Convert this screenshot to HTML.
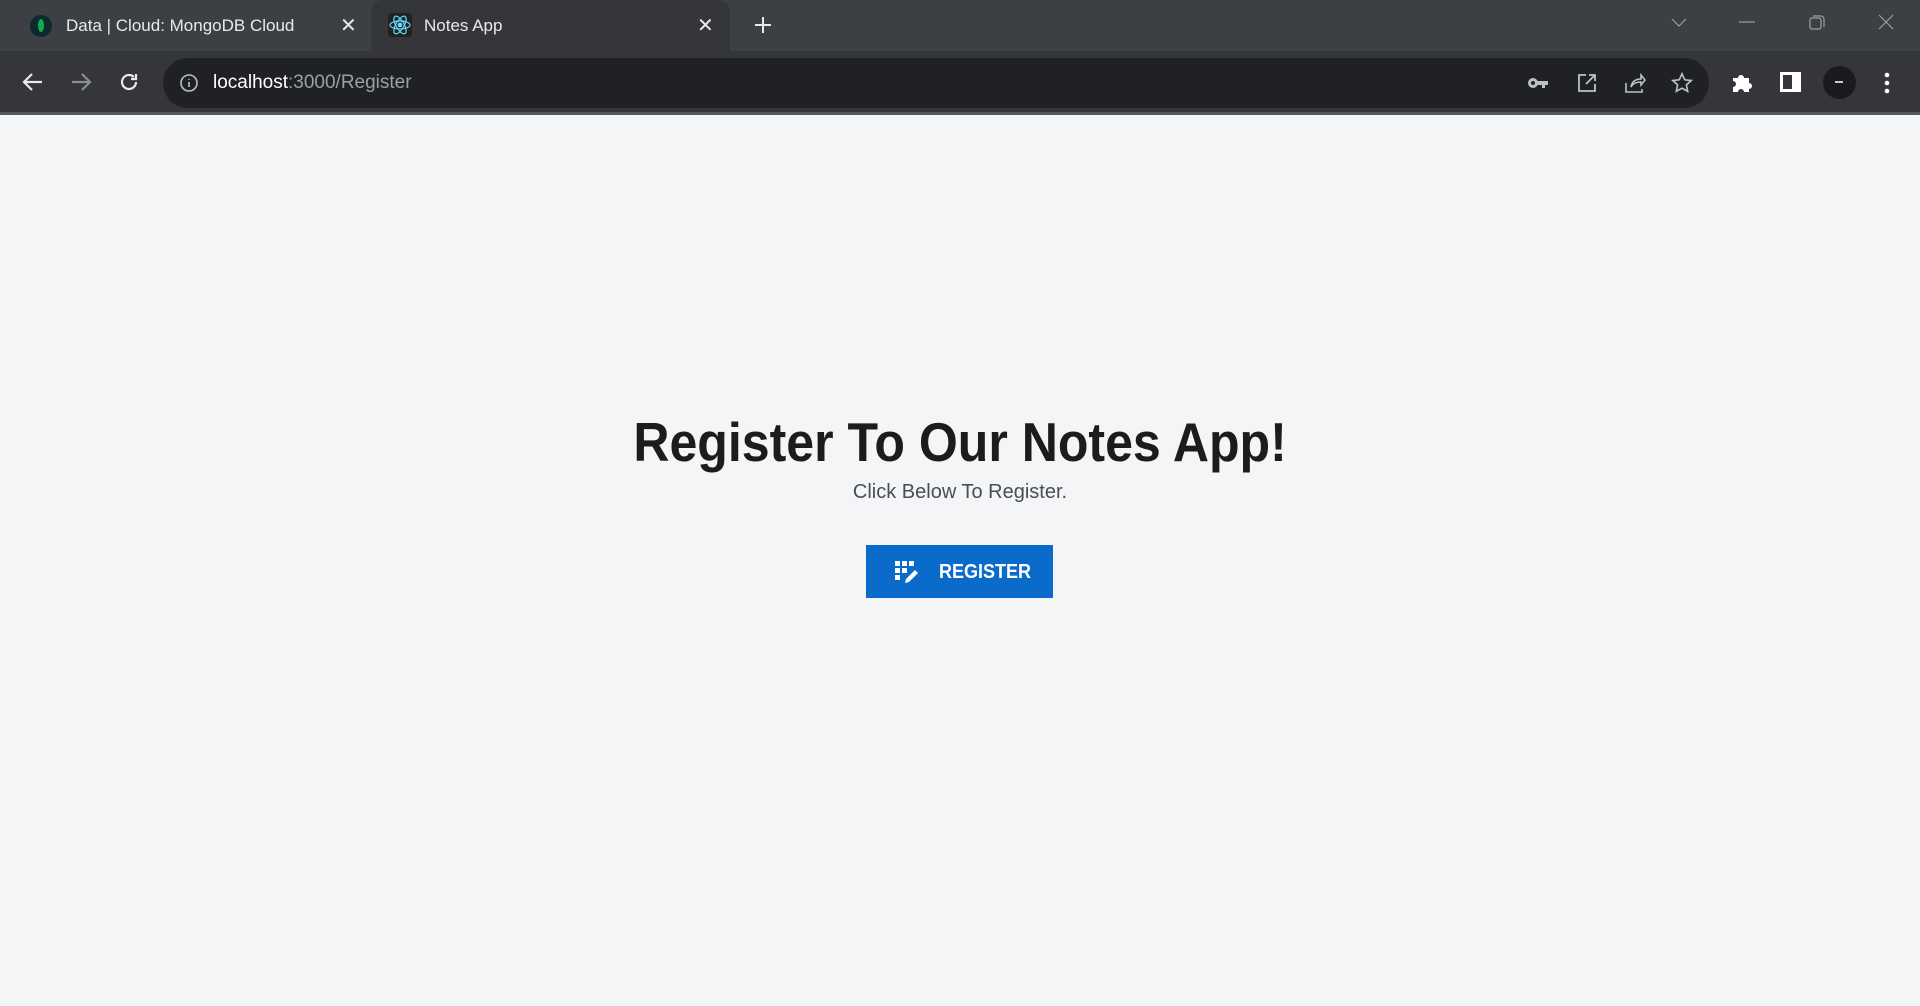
<!DOCTYPE html>
<html><head><meta charset="utf-8"><style>
*{margin:0;padding:0;box-sizing:border-box}
body{width:1920px;height:1006px;overflow:hidden;background:#f4f5f7;font-family:"Liberation Sans",sans-serif;position:relative}
.tabs{position:absolute;left:0;top:0;width:1920px;height:51px;background:#3c3f43}
.toolbar{position:absolute;left:0;top:51px;width:1920px;height:64px;background:#35363a;border-bottom:3px solid #55585d}
.tab{position:absolute;top:0;height:51px;background:#35363a;border-radius:12px 12px 0 0;}
.tt{position:absolute;top:16px;font-size:17px;color:#e8eaed;white-space:nowrap}
.x{position:absolute;top:13px;font-size:20px;color:#e8eaed}
.omni{position:absolute;left:163px;top:7px;width:1546px;height:50px;border-radius:25px;background:#202124}
svg{position:absolute}
.main{position:absolute;left:0;top:115px;width:1920px;height:891px;background:#f4f5f7}
h1{position:absolute;left:0;width:1920px;top:295px;text-align:center;font-size:55px;font-weight:bold;color:#1b1c1e;white-space:nowrap}
h1 span{display:inline-block;transform:scaleX(0.91)}
.sub{position:absolute;left:0;width:1920px;top:366px;text-align:center;font-size:20px;color:#4a4d52}
.btn{position:absolute;left:866px;top:430px;width:187px;height:53px;background:#0b6bcb;color:#fff;font-size:20px;font-weight:bold}
.btn span{position:absolute;left:73px;top:16px;transform:scaleX(0.9);transform-origin:left}
</style></head><body>
<div class="tabs">
 <div style="position:absolute;left:30px;top:15px;width:22px;height:22px;border-radius:50%;background:#0b2a2e"></div>
 <div style="position:absolute;left:38px;top:19px;width:6px;height:13px;border-radius:50%;background:#13aa52"></div>
 <div class="tt" style="left:66px">Data | Cloud: MongoDB Cloud</div>
 <div class="x" style="left:340px">✕</div>
 <div class="tab" style="left:371px;width:359px">
  <div style="position:absolute;left:17px;top:13px;width:24px;height:24px;background:#222;border-radius:3px"></div>
  <svg style="left:17px;top:13px" width="24" height="24" viewBox="0 0 24 24" fill="none" stroke="#61dafb" stroke-width="1.2"><ellipse cx="12" cy="12" rx="10" ry="4"/><ellipse cx="12" cy="12" rx="10" ry="4" transform="rotate(60 12 12)"/><ellipse cx="12" cy="12" rx="10" ry="4" transform="rotate(120 12 12)"/><circle cx="12" cy="12" r="1.8" fill="#61dafb"/></svg>
  <div class="tt" style="left:53px">Notes App</div>
  <div class="x" style="left:326px">✕</div>
 </div>
 <svg style="left:752px;top:14px" width="22" height="22" viewBox="0 0 22 22" stroke="#e8eaed" stroke-width="2"><path d="M11 3v16M3 11h16"/></svg>
 <svg style="left:1670px;top:15px" width="18" height="14" viewBox="0 0 18 14" fill="none" stroke="#9aa0a6" stroke-width="1.2"><path d="M2 4l7 7 7-7"/></svg>
 <svg style="left:1738px;top:15px" width="18" height="14" viewBox="0 0 18 14" stroke="#9aa0a6" stroke-width="1.2"><path d="M1 7h16"/></svg>
 <svg style="left:1808px;top:13px" width="18" height="18" viewBox="0 0 18 18" fill="none" stroke="#9aa0a6" stroke-width="1.2"><rect x="2" y="5" width="11" height="11" rx="2"/><path d="M5 3h8a3 3 0 0 1 3 3v8"/></svg>
 <svg style="left:1877px;top:13px" width="18" height="18" viewBox="0 0 18 18" stroke="#9aa0a6" stroke-width="1.2"><path d="M2 2l14 14M16 2L2 16"/></svg>
</div>
<div class="toolbar">
 <svg style="left:21px;top:20px" width="24" height="22" viewBox="0 0 24 22" fill="none" stroke="#e8eaed" stroke-width="2.2"><path d="M21 11H4M11 3l-8 8 8 8"/></svg>
 <svg style="left:69px;top:20px" width="24" height="22" viewBox="0 0 24 22" fill="none" stroke="#8a8d91" stroke-width="2.2"><path d="M3 11h17M13 3l8 8-8 8"/></svg>
 <svg style="left:118px;top:20px" width="22" height="22" viewBox="0 0 22 22" fill="none" stroke="#e8eaed" stroke-width="2.2"><path d="M18 11a7 7 0 1 1-2.2-5.1"/><path d="M18 3v5h-5"/></svg>
 <div class="omni">
  <svg style="left:16px;top:15px" width="20" height="20" viewBox="0 0 20 20" fill="none" stroke="#bdc1c6" stroke-width="1.6"><circle cx="10" cy="10" r="8"/><path d="M10 9v5M10 6v1"/></svg>
  <div style="position:absolute;left:50px;top:14px;font-size:19px;color:#fff;white-space:nowrap">localhost<span style="color:#9aa0a6">:3000/Register</span></div>
  <svg style="left:1364px;top:16px" width="22" height="18" viewBox="0 0 22 18" fill="#bdc1c6"><circle cx="6" cy="9" r="5"/><rect x="8" y="7" width="13" height="4"/><rect x="15" y="9" width="3" height="5"/><circle cx="6" cy="9" r="2" fill="#202124"/></svg>
  <svg style="left:1414px;top:15px" width="20" height="20" viewBox="0 0 20 20" fill="none" stroke="#bdc1c6" stroke-width="1.8"><path d="M9 2H2v16h16v-7M12 2h6v6M18 2L9 11"/></svg>
  <svg style="left:1461px;top:15px" width="22" height="21" viewBox="0 0 22 21" fill="none" stroke="#bdc1c6" stroke-width="1.6"><path d="M2 10v9h16v-3M7 14c1-6 5-8 10-8V2l4 5-4 5V9c-4 0-8 1-10 5z"/></svg>
  <svg style="left:1508px;top:14px" width="22" height="22" viewBox="0 0 24 24" fill="none" stroke="#bdc1c6" stroke-width="1.8"><path d="M12 2l3 6.5 7 .8-5.2 4.8 1.4 7L12 17.6 5.8 21l1.4-7L2 9.3l7-.8z"/></svg>
 </div>
 <svg style="left:1731px;top:20px" width="22" height="22" viewBox="0 0 22 22" fill="#fff"><path d="M2 7h5a3 3 0 0 1 6 0h5v5a3 3 0 0 1 0 6v3H13a3 3 0 0 0-6 0H2v-5a3 3 0 0 0 0-6z"/></svg>
 <svg style="left:1780px;top:21px" width="21" height="20" viewBox="0 0 21 20"><rect x="0" y="0" width="21" height="20" fill="#fff"/><rect x="3" y="3" width="9" height="14" fill="#35363a"/></svg>
 <div style="position:absolute;left:1823px;top:15px;width:33px;height:33px;border-radius:50%;background:#1a1b1d"></div>
 <div style="position:absolute;left:1835px;top:30px;width:8px;height:2px;background:#ccc"></div>
 <svg style="left:1883px;top:20px" width="8" height="24" viewBox="0 0 8 24" fill="#fff"><circle cx="4" cy="4" r="2.3"/><circle cx="4" cy="12" r="2.3"/><circle cx="4" cy="20" r="2.3"/></svg>
</div>
<div class="main">
 <h1><span>Register To Our Notes App!</span></h1>
 <div class="sub">Click Below To Register.</div>
 <div class="btn">
  <svg style="left:29px;top:16px" width="26" height="24" viewBox="0 0 26 24" fill="#fff"><rect x="0" y="0" width="5" height="5"/><rect x="7" y="0" width="5" height="5"/><rect x="14" y="0" width="5" height="5"/><rect x="0" y="7" width="5" height="5"/><rect x="7" y="7" width="5" height="5"/><rect x="0" y="14" width="5" height="5"/><path d="M10 22l1-4 9-9 3 3-9 9z"/></svg>
  <span>REGISTER</span>
 </div>
</div>
</body></html>
